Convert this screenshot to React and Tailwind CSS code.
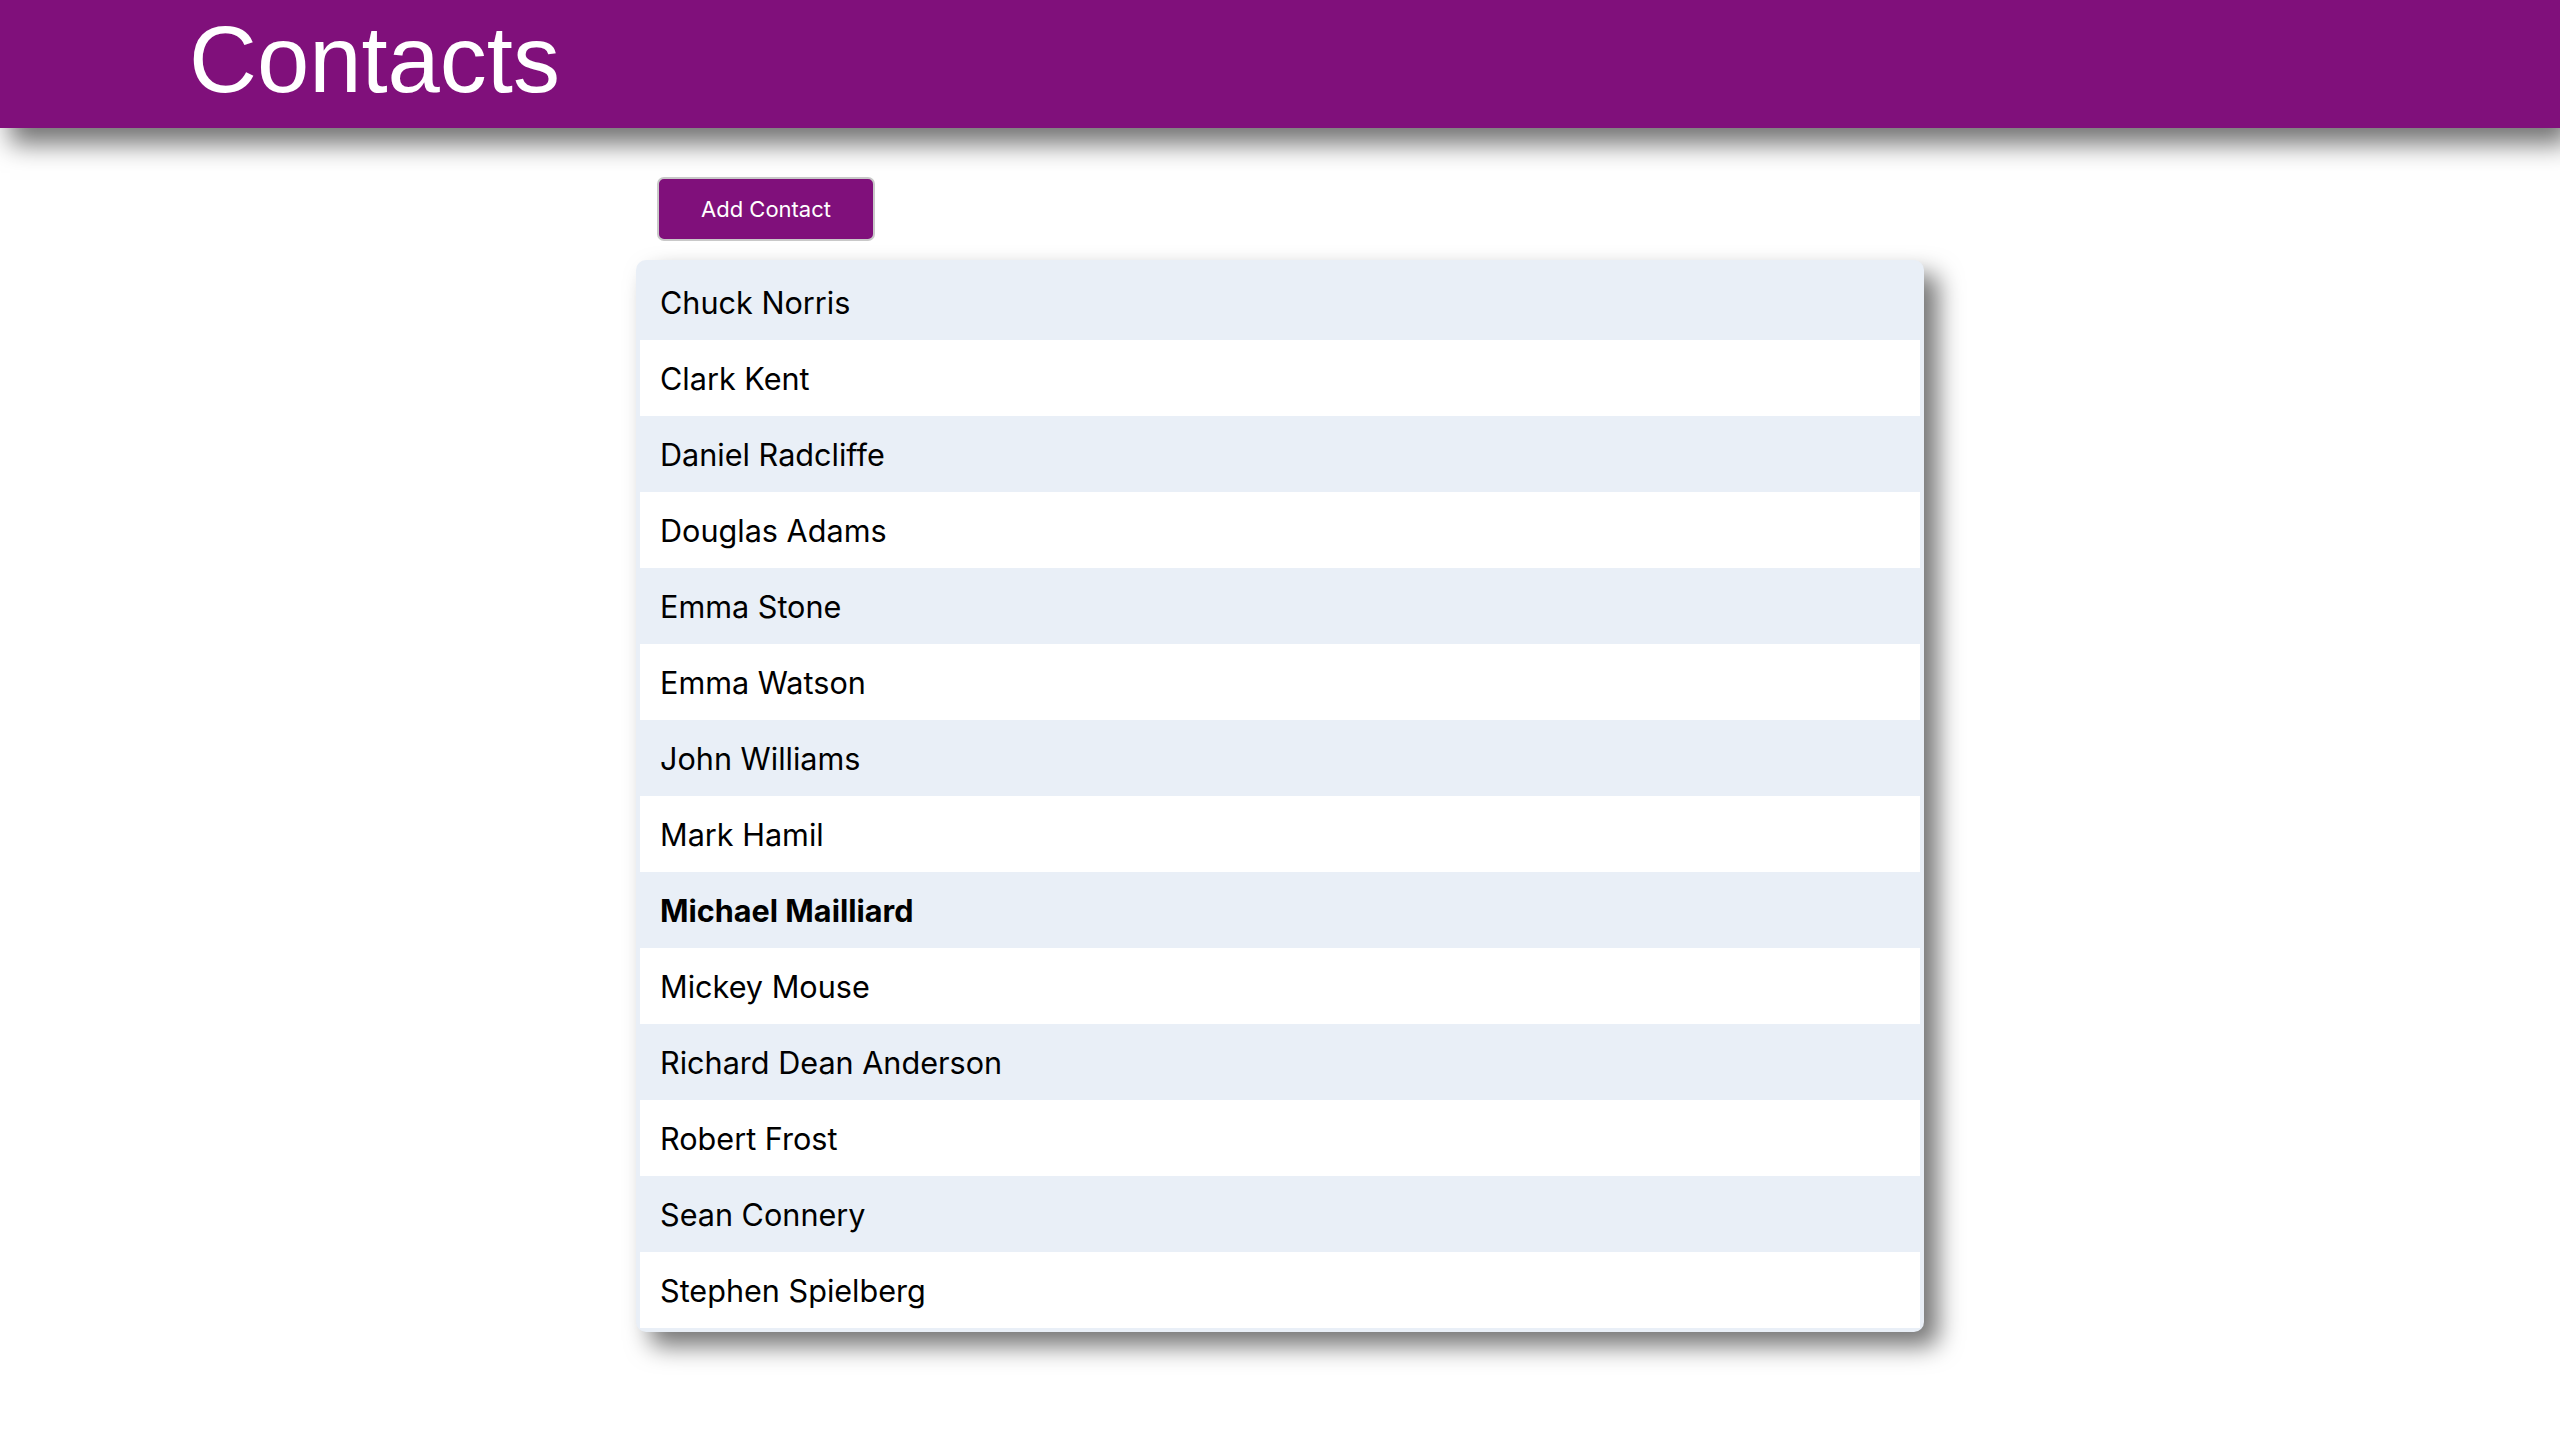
const contacts = [
  'Chuck Norris',
  'Clark Kent',
  'Daniel Radcliffe',
  'Douglas Adams',
  'Emma Stone',
  'Emma Watson',
  'John Williams',
  'Mark Hamil',
  'Michael Mailliard',
  'Mickey Mouse',
  'Richard Dean Anderson',
  'Robert Frost',
  'Sean Connery',
  'Stephen Spielberg',
];

const selected = 'Michael Mailliard';

export default function App() {
  return (
    <div className="min-h-[1442px] bg-white font-['Inter','Noto_Sans',sans-serif] text-black">
      <header className="relative z-10 h-[128px] bg-[#80107b] pl-[189px] pt-[13px] shadow-[10px_16px_24px_rgba(0,0,0,0.55)]">
        <h1 className="font-['Liberation_Sans',Arial,sans-serif] text-[94px] leading-[94px] font-normal text-white">
          Contacts
        </h1>
      </header>

      <main className="w-[1288px] mx-auto">
        <button className="ml-[21px] mt-[49px] h-[64px] w-[218px] rounded-[7px] border-2 border-[#c9c9c9] bg-[#80107b] text-[22px] text-white">
          Add Contact
        </button>

        <ul className="mt-[19px] rounded-[10px] bg-[#e9eff7] p-[4px] shadow-[14px_14px_24px_rgba(0,0,0,0.55)]">
          {contacts.map((name, i) => (
            <li key={name}
              className={`flex h-[76px] items-center pl-[20px] pt-[1px] text-[30.6px] ${i % 2 === 0 ? 'bg-[#e9eff7]' : 'bg-white'} ${name === selected ? 'font-bold' : ''}`}>
              {name}
            </li>
          ))}
        </ul>
      </main>
    </div>
  );
}
